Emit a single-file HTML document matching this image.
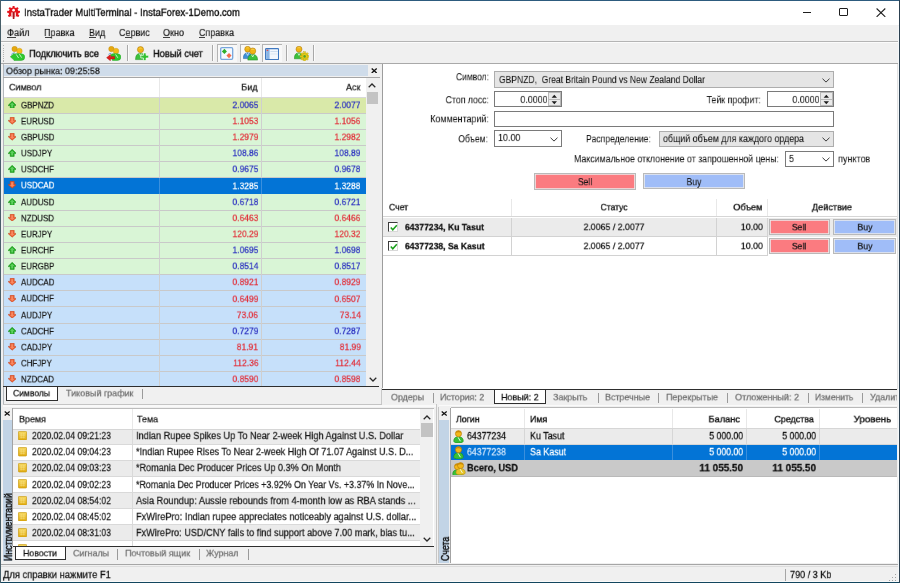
<!DOCTYPE html>
<html><head><meta charset="utf-8"><title>InstaTrader MultiTerminal</title><style>
html,body{margin:0;padding:0;width:900px;height:583px;overflow:hidden;background:#f0f0f0}
body{position:relative;font-family:"Liberation Sans", sans-serif}
.b{position:absolute}
.t{position:absolute;white-space:nowrap;line-height:1;font-family:"Liberation Sans", sans-serif;will-change:transform}
</style></head><body>
<div class="b" style="left:0.00px;top:0.00px;width:900.00px;height:583.00px;background:#f0f0f0"></div>
<div class="b" style="left:1.00px;top:1.00px;width:898.00px;height:24.00px;background:#fff"></div>
<div class="b" style="left:0.00px;top:0.00px;width:900.00px;height:1.00px;background:#2d5b7e"></div>
<div class="b" style="left:0.00px;top:582.00px;width:900.00px;height:1.00px;background:#2d5b7e"></div>
<div class="b" style="left:0.00px;top:0.00px;width:1.00px;height:583.00px;background:#35596f"></div>
<div class="b" style="left:899.00px;top:0.00px;width:1.00px;height:583.00px;background:#2d5b7e"></div>
<svg class="b" style="left:7px;top:5.6px" width="13.2" height="13.4" viewBox="0 0 13 13.2">
<g fill="#e4141c">
<circle cx="6.5" cy="6.4" r="4.9"/>
<g id="tt"><rect x="5.5" y="0" width="2" height="2.4" rx="0.4"/></g>
<use href="#tt" transform="rotate(42 6.5 6.4)"/><use href="#tt" transform="rotate(84 6.5 6.4)"/><use href="#tt" transform="rotate(126 6.5 6.4)"/>
<use href="#tt" transform="rotate(-42 6.5 6.4)"/><use href="#tt" transform="rotate(-84 6.5 6.4)"/><use href="#tt" transform="rotate(-126 6.5 6.4)"/>
</g>
<g fill="#fff"><circle cx="6.5" cy="4.1" r="1.3"/><rect x="4.3" y="6.3" width="1.3" height="7"/><rect x="7.4" y="6.3" width="1.3" height="7"/><rect x="5.5" y="11.6" width="2" height="1.6"/></g>
<rect x="5.7" y="6" width="1.6" height="7" fill="#a8141c"/>
</svg>
<div class="t" style="left:24.00px;top:7px;font-size:13.46px;color:#151515;transform:scale(0.711,0.81);transform-origin:0 0;-webkit-text-stroke-width:0.45px;">InstaTrader MultiTerminal - InstaForex-1Demo.com</div>
<div class="b" style="left:802.80px;top:11.80px;width:8.40px;height:1.00px;background:#1e1e1e"></div>
<div class="b" style="left:839.00px;top:8.10px;width:8.80px;height:7.80px;border:1.1px solid #1e1e1e;box-sizing:border-box;border-radius:1px"></div>
<svg class="b" style="left:875.5px;top:7.6px" width="10" height="9.4" viewBox="0 0 10 9.4"><path d="M0.6 0.5 L9.3 8.9 M9.3 0.5 L0.6 8.9" stroke="#1e1e1e" stroke-width="1.05"/></svg>
<div class="b" style="left:1.00px;top:25.00px;width:898.00px;height:16.00px;background:#f0f0f0"></div>
<div class="b" style="left:1.00px;top:41.00px;width:898.00px;height:1.00px;background:#b4b4b4"></div>
<div class="t" style="left:6.70px;top:28px;font-size:12.10px;color:#151515;transform:scale(0.7595,0.81);transform-origin:0 0;-webkit-text-stroke-width:0.2px;">Файл</div>
<div class="b" style="left:6.50px;top:36.9px;width:9px;height:0.9px;background:#404040"></div>
<div class="t" style="left:44.00px;top:28px;font-size:12.10px;color:#151515;transform:scale(0.7438,0.81);transform-origin:0 0;-webkit-text-stroke-width:0.2px;">Правка</div>
<div class="b" style="left:44.50px;top:36.9px;width:7px;height:0.9px;background:#404040"></div>
<div class="t" style="left:89.30px;top:28px;font-size:12.10px;color:#151515;transform:scale(0.7438,0.81);transform-origin:0 0;-webkit-text-stroke-width:0.2px;">Вид</div>
<div class="b" style="left:89.40px;top:36.9px;width:6.2px;height:0.9px;background:#404040"></div>
<div class="t" style="left:119.20px;top:28px;font-size:12.10px;color:#151515;transform:scale(0.7438,0.81);transform-origin:0 0;-webkit-text-stroke-width:0.2px;">Сервис</div>
<div class="b" style="left:125.00px;top:36.9px;width:5.6px;height:0.9px;background:#404040"></div>
<div class="t" style="left:163.20px;top:28px;font-size:12.10px;color:#151515;transform:scale(0.7438,0.81);transform-origin:0 0;-webkit-text-stroke-width:0.2px;">Окно</div>
<div class="b" style="left:163.40px;top:36.9px;width:7px;height:0.9px;background:#404040"></div>
<div class="t" style="left:198.70px;top:28px;font-size:12.10px;color:#151515;transform:scale(0.7372,0.81);transform-origin:0 0;-webkit-text-stroke-width:0.2px;">Справка</div>
<div class="b" style="left:198.80px;top:36.9px;width:6.2px;height:0.9px;background:#404040"></div>
<div class="b" style="left:1.00px;top:42.00px;width:898.00px;height:21.00px;background:#f0f0f0"></div>
<div class="b" style="left:1.00px;top:42.00px;width:898.00px;height:1.00px;background:#fbfbfb"></div>
<div class="b" style="left:1.00px;top:63.00px;width:898.00px;height:1.00px;background:#a9a9a9"></div>
<div class="b" style="left:2.50px;top:45.40px;width:1.60px;height:1.10px;background:#b2b2b2"></div>
<div class="b" style="left:2.50px;top:47.55px;width:1.60px;height:1.10px;background:#b2b2b2"></div>
<div class="b" style="left:2.50px;top:49.70px;width:1.60px;height:1.10px;background:#b2b2b2"></div>
<div class="b" style="left:2.50px;top:51.85px;width:1.60px;height:1.10px;background:#b2b2b2"></div>
<div class="b" style="left:2.50px;top:54.00px;width:1.60px;height:1.10px;background:#b2b2b2"></div>
<div class="b" style="left:2.50px;top:56.15px;width:1.60px;height:1.10px;background:#b2b2b2"></div>
<div class="b" style="left:2.50px;top:58.30px;width:1.60px;height:1.10px;background:#b2b2b2"></div>
<div class="b" style="left:2.50px;top:60.45px;width:1.60px;height:1.10px;background:#b2b2b2"></div>
<div class="b" style="left:126.90px;top:45.00px;width:1.10px;height:16.00px;background:#a8a8a8"></div>
<div class="b" style="left:128.00px;top:45.00px;width:0.90px;height:16.00px;background:#fbfbfb"></div>
<div class="b" style="left:212.10px;top:45.00px;width:1.10px;height:16.00px;background:#a8a8a8"></div>
<div class="b" style="left:213.20px;top:45.00px;width:0.90px;height:16.00px;background:#fbfbfb"></div>
<div class="b" style="left:286.10px;top:45.00px;width:1.10px;height:16.00px;background:#a8a8a8"></div>
<div class="b" style="left:287.20px;top:45.00px;width:0.90px;height:16.00px;background:#fbfbfb"></div>
<div class="b" style="left:313.00px;top:45.00px;width:1.10px;height:16.00px;background:#a8a8a8"></div>
<div class="b" style="left:314.10px;top:45.00px;width:0.90px;height:16.00px;background:#fbfbfb"></div>
<div class="t" style="left:28.60px;top:49px;font-size:12.59px;color:#151515;transform:scale(0.7403,0.81);transform-origin:0 0;-webkit-text-stroke-width:0.5px;">Подключить все</div>
<div class="t" style="left:153.30px;top:49px;font-size:12.59px;color:#151515;transform:scale(0.7403,0.81);transform-origin:0 0;-webkit-text-stroke-width:0.5px;">Новый счет</div>
<div class="b" style="left:217.10px;top:44.10px;width:19.90px;height:17.50px;background:#f8f8f8;border-top:1.2px solid #b4b4b4;border-left:1.2px solid #b4b4b4;box-sizing:border-box"></div>
<div class="b" style="left:239.70px;top:44.10px;width:20.30px;height:17.50px;background:#f8f8f8;border-top:1.2px solid #b4b4b4;border-left:1.2px solid #b4b4b4;box-sizing:border-box"></div>
<div class="b" style="left:261.80px;top:44.10px;width:20.50px;height:17.50px;background:#f8f8f8;border-top:1.2px solid #b4b4b4;border-left:1.2px solid #b4b4b4;box-sizing:border-box"></div>
<svg class="b" style="left:9.8px;top:46.2px" width="15.5" height="15" viewBox="0 0 15.5 15">
<path d="M1.2 8.6 Q2.6 6.6 5 6.8" stroke="#6aa8d8" stroke-width="0.9" fill="none"/>
<circle cx="4.6" cy="3" r="2.7" fill="#e6a810" stroke="#c08808" stroke-width="0.4"/><circle cx="9.4" cy="5" r="2.8" fill="#f2bc18" stroke="#c89010" stroke-width="0.4"/>
<path d="M0.3 10.8 L4 7.4 L4 8.2 Q6.2 7.3 9.2 7.7 L11.6 7.7 Q14.8 8.3 14.8 11 Q14.8 14.5 11 14.5 L4 14.5 L4 14.1 Z" fill="#2ec82e" stroke="#16a016" stroke-width="0.4"/>
<path d="M6.2 8.4 L8.6 12 M9.4 8.2 L11.6 11.6" stroke="#e8fbe8" stroke-width="0.8"/>
</svg>
<svg class="b" style="left:105.6px;top:46.2px" width="15.5" height="15" viewBox="0 0 15.5 15">
<circle cx="5.4" cy="3" r="2.7" fill="#e6a810" stroke="#c08808" stroke-width="0.4"/><circle cx="10" cy="5" r="2.8" fill="#f2bc18" stroke="#c89010" stroke-width="0.4"/>
<path d="M4.6 9 Q6.6 7.3 9.6 7.7 L11.8 7.7 Q14.9 8.3 14.9 11 Q14.9 14.5 11.2 14.5 L6.5 14.5 Z" fill="#2ec82e" stroke="#16a016" stroke-width="0.4"/>
<path d="M9.6 8.4 L11.8 11.8" stroke="#e8fbe8" stroke-width="0.8"/>
<path d="M2.4 8.4 Q3.6 7.2 5.4 7.4" stroke="#5aa0d8" stroke-width="0.9" fill="none"/>
<path d="M0.6 11.7 L4.4 8.6 L4.4 10.4 L8.6 10.4 L8.6 13 L4.4 13 L4.4 14.8 Z" fill="#e01c1c" stroke="#a00c0c" stroke-width="0.4"/>
</svg>
<svg class="b" style="left:134.6px;top:46.2px" width="14.5" height="15" viewBox="0 0 14.5 15">
<path d="M0.5 13.6 Q0.5 7.2 5.5 7.2 Q10.5 7.2 10.5 13.6 Z" fill="#3cc03c" stroke="#1a8a1a" stroke-width="0.5"/><path d="M4.3 7.5 L5.5 9.8 L6.7 7.5" stroke="#f0fff0" stroke-width="0.7" fill="none"/><circle cx="5.5" cy="3.6" r="3.1" fill="#f0b414" stroke="#a87406" stroke-width="0.5"/><path d="M3.33 2.67 Q5.5 0.1899999999999995 7.67 2.67" fill="#f8d860" opacity="0.6"/>
<path d="M8.4 6.9 H11.1 V9.3 H13.7 V12 H11.1 V14.6 H8.4 V12 H5.8 V9.3 H8.4 Z" fill="#30c030" stroke="#fff" stroke-width="0.7"/></svg>
<svg class="b" style="left:220.3px;top:47px" width="13.4" height="13" viewBox="0 0 13.4 13">
<rect x="0.7" y="0.7" width="12" height="11.6" rx="1.2" fill="#f4f9ff" stroke="#78a6dc" stroke-width="1.3"/>
<rect x="2.6" y="2.6" width="3.6" height="3.6" fill="#2cae2c" transform="rotate(45 4.4 4.4)"/>
<rect x="7.2" y="6.8" width="3.6" height="3.6" fill="#f4684a" transform="rotate(45 9 8.6)"/></svg>
<svg class="b" style="left:242.7px;top:46.4px" width="15" height="14.2" viewBox="0 0 15 14.2">
<path d="M0.3 12.6 Q0.3 6.8 4.6000000000000005 6.8 Q8.9 6.8 8.9 12.6 Z" fill="#3f90d8" stroke="#2060a0" stroke-width="0.5"/><path d="M3.4000000000000004 7.1 L4.6000000000000005 9.4 L5.800000000000001 7.1" stroke="#f0fff0" stroke-width="0.7" fill="none"/><circle cx="4.6" cy="3.2" r="2.9" fill="#f0b414" stroke="#a87406" stroke-width="0.5"/><path d="M2.57 2.33 Q4.6 0.010000000000000231 6.629999999999999 2.33" fill="#f8d860" opacity="0.6"/>
<path d="M4.8 14.1 Q4.8 8.4 9.7 8.4 Q14.6 8.4 14.6 14.1 Z" fill="#3cc03c" stroke="#1a8a1a" stroke-width="0.5"/><path d="M8.5 8.700000000000001 L9.7 11.0 L10.899999999999999 8.700000000000001" stroke="#f0fff0" stroke-width="0.7" fill="none"/><circle cx="9.7" cy="5" r="3.1" fill="#f0b414" stroke="#a87406" stroke-width="0.5"/><path d="M7.529999999999999 4.07 Q9.7 1.5899999999999994 11.87 4.07" fill="#f8d860" opacity="0.6"/></svg>
<svg class="b" style="left:265px;top:47.5px" width="14.2" height="12.2" viewBox="0 0 14.2 12.2">
<rect x="0.6" y="0.6" width="13" height="11" rx="0.8" fill="#f2f7fd" stroke="#3f78c0" stroke-width="1.2"/>
<rect x="1.2" y="1.2" width="3.4" height="9.8" fill="#8ab4e4"/><rect x="1.6" y="1.6" width="1.6" height="1.4" fill="#e05050"/>
<rect x="5.4" y="3.2" width="7.4" height="0.8" fill="#c4d6ea"/><rect x="5.4" y="5.6" width="7.4" height="0.8" fill="#d6e2ee"/></svg>
<svg class="b" style="left:293.8px;top:45.6px" width="15.4" height="15.2" viewBox="0 0 15.4 15.2">
<path d="M0.3 12.8 Q0.3 6.8 5.0 6.8 Q9.7 6.8 9.7 12.8 Z" fill="#3cc03c" stroke="#1a8a1a" stroke-width="0.5"/><path d="M3.8 7.1 L5.0 9.4 L6.2 7.1" stroke="#f0fff0" stroke-width="0.7" fill="none"/><circle cx="5" cy="3.2" r="3" fill="#f0b414" stroke="#a87406" stroke-width="0.5"/><path d="M2.9000000000000004 2.3000000000000003 Q5 -0.10000000000000009 7.1 2.3000000000000003" fill="#f8d860" opacity="0.6"/>
<g transform="translate(10.6 10.4)"><g fill="#e8d018" stroke="#b8a010" stroke-width="0.4">
<circle r="3.3"/><rect x="-0.9" y="-4.6" width="1.8" height="2" transform="rotate(0)"/><rect x="-0.9" y="-4.6" width="1.8" height="2" transform="rotate(45)"/><rect x="-0.9" y="-4.6" width="1.8" height="2" transform="rotate(90)"/><rect x="-0.9" y="-4.6" width="1.8" height="2" transform="rotate(135)"/><rect x="-0.9" y="-4.6" width="1.8" height="2" transform="rotate(180)"/><rect x="-0.9" y="-4.6" width="1.8" height="2" transform="rotate(225)"/><rect x="-0.9" y="-4.6" width="1.8" height="2" transform="rotate(270)"/><rect x="-0.9" y="-4.6" width="1.8" height="2" transform="rotate(315)"/></g>
<circle r="1.3" fill="#58a028"/></g></svg>
<div class="b" style="left:3.00px;top:64.00px;width:1.00px;height:340.00px;background:#b4b8bc"></div>
<div class="b" style="left:4.00px;top:65.00px;width:364.00px;height:11.00px;background:#cfdcea"></div>
<div class="t" style="left:5.50px;top:66px;font-size:11.60px;color:#1a1a1a;transform:scale(0.775,0.81);transform-origin:0 0;-webkit-text-stroke-width:0.3px;">Обзор рынка: 09:25:58</div>
<svg class="b" style="left:371.4px;top:67.8px" width="6.4" height="5.6" viewBox="0 0 6.4 5.6"><path d="M0.7 0.6 L5.7 5 M5.7 0.6 L0.7 5" stroke="#111" stroke-width="1.35"/></svg>
<div class="b" style="left:3.00px;top:76.80px;width:377.00px;height:1.00px;background:#a6a6a6"></div>
<div class="b" style="left:4.00px;top:77.80px;width:362.00px;height:308.50px;background:#fff"></div>
<div class="b" style="left:159.20px;top:78.00px;width:1.00px;height:19.00px;background:#e8e8e8"></div>
<div class="b" style="left:261.20px;top:78.00px;width:1.00px;height:19.00px;background:#e8e8e8"></div>
<div class="b" style="left:4.00px;top:96.60px;width:362.00px;height:1.00px;background:#d8d8d8"></div>
<div class="t" style="left:9.40px;top:83px;font-size:10.86px;color:#1a1a1a;transform:scale(0.8297,0.81);transform-origin:0 0;-webkit-text-stroke-width:0.3px;">Символ</div>
<div class="t" style="right:642.40px;top:83px;font-size:10.86px;color:#1a1a1a;transform:scale(0.8287,0.81);transform-origin:100% 0;-webkit-text-stroke-width:0.3px;">Бид</div>
<div class="t" style="right:539.80px;top:83px;font-size:10.86px;color:#1a1a1a;transform:scale(0.8287,0.81);transform-origin:100% 0;-webkit-text-stroke-width:0.3px;">Аск</div>
<div class="b" style="left:4px;top:97px;width:362px;height:289.3px;overflow:hidden">
<div class="b" style="left:0.00px;top:0.50px;width:362.00px;height:16.15px;background:#d9e9a9"></div>
<div class="b" style="left:0.00px;top:15.65px;width:362.00px;height:1.00px;background:#c9c9c9"></div>
<div class="b" style="left:155.20px;top:0.50px;width:1.00px;height:16.15px;background:#cfcfcf"></div>
<div class="b" style="left:257.20px;top:0.50px;width:1.00px;height:16.15px;background:#cfcfcf"></div>
<svg class="b" style="left:3.8px;top:3.70px" width="8.6" height="7.7" viewBox="0 0 8.6 7.7"><path d="M4.2 0.3 L8.2 4.2 Q8.5 4.6 8 4.6 L6.2 4.6 L6.2 7.4 L2.2 7.4 L2.2 4.6 L0.4 4.6 Q-0.1 4.6 0.2 4.2 Z" fill="#1eaa1e" stroke="#118a11" stroke-width="0.5" stroke-linejoin="round"/><path d="M4.2 1.6 L6.4 3.9 L5.2 3.9 L5.2 6.4 L3.2 6.4 L3.2 3.9 L2 3.9 Z" fill="#8ae88a" opacity="0.6"/></svg>
<div class="t" style="left:16.60px;top:4px;font-size:10.99px;color:#1c1c1c;transform:scale(0.7207,0.81);transform-origin:0 0;-webkit-text-stroke-width:0.3px;">GBPNZD</div>
<div class="t" style="right:107.70px;top:3px;font-size:11.60px;color:#2b30c0;transform:scale(0.7328,0.81);transform-origin:100% 0;-webkit-text-stroke-width:0.3px;">2.0065</div>
<div class="t" style="right:5.20px;top:3px;font-size:11.60px;color:#2b30c0;transform:scale(0.7328,0.81);transform-origin:100% 0;-webkit-text-stroke-width:0.3px;">2.0077</div>
<div class="b" style="left:0.00px;top:16.65px;width:362.00px;height:16.15px;background:#d9f5d6"></div>
<div class="b" style="left:0.00px;top:31.80px;width:362.00px;height:1.00px;background:#c9c9c9"></div>
<div class="b" style="left:155.20px;top:16.65px;width:1.00px;height:16.15px;background:#cfcfcf"></div>
<div class="b" style="left:257.20px;top:16.65px;width:1.00px;height:16.15px;background:#cfcfcf"></div>
<svg class="b" style="left:3.8px;top:19.85px" width="8.6" height="7.7" viewBox="0 0 8.6 7.7"><path d="M2.2 0.3 L6.2 0.3 L6.2 3.4 L8 3.4 Q8.5 3.4 8.2 3.8 L4.2 7.2 L0.2 3.8 Q-0.1 3.4 0.4 3.4 L2.2 3.4 Z" fill="#ee5a2c" stroke="#c0401a" stroke-width="0.5" stroke-linejoin="round"/><path d="M3.2 1.2 L5.2 1.2 L5.2 3.9 L6.4 3.9 L4.2 5.9 L2 3.9 L3.2 3.9 Z" fill="#ffb090" opacity="0.55"/></svg>
<div class="t" style="left:16.60px;top:20px;font-size:10.99px;color:#1c1c1c;transform:scale(0.7207,0.81);transform-origin:0 0;-webkit-text-stroke-width:0.3px;">EURUSD</div>
<div class="t" style="right:107.70px;top:19px;font-size:11.60px;color:#e2303a;transform:scale(0.7328,0.81);transform-origin:100% 0;-webkit-text-stroke-width:0.3px;">1.1053</div>
<div class="t" style="right:5.20px;top:19px;font-size:11.60px;color:#e2303a;transform:scale(0.7328,0.81);transform-origin:100% 0;-webkit-text-stroke-width:0.3px;">1.1056</div>
<div class="b" style="left:0.00px;top:32.80px;width:362.00px;height:16.15px;background:#d9f5d6"></div>
<div class="b" style="left:0.00px;top:47.95px;width:362.00px;height:1.00px;background:#c9c9c9"></div>
<div class="b" style="left:155.20px;top:32.80px;width:1.00px;height:16.15px;background:#cfcfcf"></div>
<div class="b" style="left:257.20px;top:32.80px;width:1.00px;height:16.15px;background:#cfcfcf"></div>
<svg class="b" style="left:3.8px;top:36.00px" width="8.6" height="7.7" viewBox="0 0 8.6 7.7"><path d="M2.2 0.3 L6.2 0.3 L6.2 3.4 L8 3.4 Q8.5 3.4 8.2 3.8 L4.2 7.2 L0.2 3.8 Q-0.1 3.4 0.4 3.4 L2.2 3.4 Z" fill="#ee5a2c" stroke="#c0401a" stroke-width="0.5" stroke-linejoin="round"/><path d="M3.2 1.2 L5.2 1.2 L5.2 3.9 L6.4 3.9 L4.2 5.9 L2 3.9 L3.2 3.9 Z" fill="#ffb090" opacity="0.55"/></svg>
<div class="t" style="left:16.60px;top:36px;font-size:10.99px;color:#1c1c1c;transform:scale(0.7207,0.81);transform-origin:0 0;-webkit-text-stroke-width:0.3px;">GBPUSD</div>
<div class="t" style="right:107.70px;top:35px;font-size:11.60px;color:#e2303a;transform:scale(0.7328,0.81);transform-origin:100% 0;-webkit-text-stroke-width:0.3px;">1.2979</div>
<div class="t" style="right:5.20px;top:35px;font-size:11.60px;color:#e2303a;transform:scale(0.7328,0.81);transform-origin:100% 0;-webkit-text-stroke-width:0.3px;">1.2982</div>
<div class="b" style="left:0.00px;top:48.95px;width:362.00px;height:16.15px;background:#d9f5d6"></div>
<div class="b" style="left:0.00px;top:64.10px;width:362.00px;height:1.00px;background:#c9c9c9"></div>
<div class="b" style="left:155.20px;top:48.95px;width:1.00px;height:16.15px;background:#cfcfcf"></div>
<div class="b" style="left:257.20px;top:48.95px;width:1.00px;height:16.15px;background:#cfcfcf"></div>
<svg class="b" style="left:3.8px;top:52.15px" width="8.6" height="7.7" viewBox="0 0 8.6 7.7"><path d="M4.2 0.3 L8.2 4.2 Q8.5 4.6 8 4.6 L6.2 4.6 L6.2 7.4 L2.2 7.4 L2.2 4.6 L0.4 4.6 Q-0.1 4.6 0.2 4.2 Z" fill="#1eaa1e" stroke="#118a11" stroke-width="0.5" stroke-linejoin="round"/><path d="M4.2 1.6 L6.4 3.9 L5.2 3.9 L5.2 6.4 L3.2 6.4 L3.2 3.9 L2 3.9 Z" fill="#8ae88a" opacity="0.6"/></svg>
<div class="t" style="left:16.60px;top:52px;font-size:10.99px;color:#1c1c1c;transform:scale(0.7207,0.81);transform-origin:0 0;-webkit-text-stroke-width:0.3px;">USDJPY</div>
<div class="t" style="right:107.70px;top:51px;font-size:11.60px;color:#2b30c0;transform:scale(0.7328,0.81);transform-origin:100% 0;-webkit-text-stroke-width:0.3px;">108.86</div>
<div class="t" style="right:5.20px;top:51px;font-size:11.60px;color:#2b30c0;transform:scale(0.7328,0.81);transform-origin:100% 0;-webkit-text-stroke-width:0.3px;">108.89</div>
<div class="b" style="left:0.00px;top:65.10px;width:362.00px;height:16.15px;background:#d9f5d6"></div>
<div class="b" style="left:0.00px;top:80.25px;width:362.00px;height:1.00px;background:#c9c9c9"></div>
<div class="b" style="left:155.20px;top:65.10px;width:1.00px;height:16.15px;background:#cfcfcf"></div>
<div class="b" style="left:257.20px;top:65.10px;width:1.00px;height:16.15px;background:#cfcfcf"></div>
<svg class="b" style="left:3.8px;top:68.30px" width="8.6" height="7.7" viewBox="0 0 8.6 7.7"><path d="M4.2 0.3 L8.2 4.2 Q8.5 4.6 8 4.6 L6.2 4.6 L6.2 7.4 L2.2 7.4 L2.2 4.6 L0.4 4.6 Q-0.1 4.6 0.2 4.2 Z" fill="#1eaa1e" stroke="#118a11" stroke-width="0.5" stroke-linejoin="round"/><path d="M4.2 1.6 L6.4 3.9 L5.2 3.9 L5.2 6.4 L3.2 6.4 L3.2 3.9 L2 3.9 Z" fill="#8ae88a" opacity="0.6"/></svg>
<div class="t" style="left:16.60px;top:68px;font-size:10.99px;color:#1c1c1c;transform:scale(0.7207,0.81);transform-origin:0 0;-webkit-text-stroke-width:0.3px;">USDCHF</div>
<div class="t" style="right:107.70px;top:67px;font-size:11.60px;color:#2b30c0;transform:scale(0.7328,0.81);transform-origin:100% 0;-webkit-text-stroke-width:0.3px;">0.9675</div>
<div class="t" style="right:5.20px;top:67px;font-size:11.60px;color:#2b30c0;transform:scale(0.7328,0.81);transform-origin:100% 0;-webkit-text-stroke-width:0.3px;">0.9678</div>
<div class="b" style="left:0.00px;top:81.25px;width:362.00px;height:16.15px;background:#0374d6"></div>
<div class="b" style="left:257.20px;top:81.25px;width:1.00px;height:16.15px;background:#3a90de"></div>
<div class="b" style="left:155.20px;top:81.25px;width:1.00px;height:16.15px;background:#3a90de"></div>
<svg class="b" style="left:3.8px;top:84.45px" width="8.6" height="7.7" viewBox="0 0 8.6 7.7"><path d="M2.2 0.3 L6.2 0.3 L6.2 3.4 L8 3.4 Q8.5 3.4 8.2 3.8 L4.2 7.2 L0.2 3.8 Q-0.1 3.4 0.4 3.4 L2.2 3.4 Z" fill="#ee5a2c" stroke="#c0401a" stroke-width="0.5" stroke-linejoin="round"/><path d="M3.2 1.2 L5.2 1.2 L5.2 3.9 L6.4 3.9 L4.2 5.9 L2 3.9 L3.2 3.9 Z" fill="#ffb090" opacity="0.55"/></svg>
<div class="t" style="left:16.60px;top:84px;font-size:10.99px;color:#fff;transform:scale(0.7207,0.81);transform-origin:0 0;-webkit-text-stroke-width:0.3px;">USDCAD</div>
<div class="t" style="right:107.70px;top:84px;font-size:11.60px;color:#fff;transform:scale(0.7328,0.81);transform-origin:100% 0;-webkit-text-stroke-width:0.3px;">1.3285</div>
<div class="t" style="right:5.20px;top:84px;font-size:11.60px;color:#fff;transform:scale(0.7328,0.81);transform-origin:100% 0;-webkit-text-stroke-width:0.3px;">1.3288</div>
<div class="b" style="left:0.00px;top:97.40px;width:362.00px;height:16.15px;background:#d9f5d6"></div>
<div class="b" style="left:0.00px;top:112.55px;width:362.00px;height:1.00px;background:#c9c9c9"></div>
<div class="b" style="left:155.20px;top:97.40px;width:1.00px;height:16.15px;background:#cfcfcf"></div>
<div class="b" style="left:257.20px;top:97.40px;width:1.00px;height:16.15px;background:#cfcfcf"></div>
<svg class="b" style="left:3.8px;top:100.60px" width="8.6" height="7.7" viewBox="0 0 8.6 7.7"><path d="M4.2 0.3 L8.2 4.2 Q8.5 4.6 8 4.6 L6.2 4.6 L6.2 7.4 L2.2 7.4 L2.2 4.6 L0.4 4.6 Q-0.1 4.6 0.2 4.2 Z" fill="#1eaa1e" stroke="#118a11" stroke-width="0.5" stroke-linejoin="round"/><path d="M4.2 1.6 L6.4 3.9 L5.2 3.9 L5.2 6.4 L3.2 6.4 L3.2 3.9 L2 3.9 Z" fill="#8ae88a" opacity="0.6"/></svg>
<div class="t" style="left:16.60px;top:101px;font-size:10.99px;color:#1c1c1c;transform:scale(0.7207,0.81);transform-origin:0 0;-webkit-text-stroke-width:0.3px;">AUDUSD</div>
<div class="t" style="right:107.70px;top:100px;font-size:11.60px;color:#2b30c0;transform:scale(0.7328,0.81);transform-origin:100% 0;-webkit-text-stroke-width:0.3px;">0.6718</div>
<div class="t" style="right:5.20px;top:100px;font-size:11.60px;color:#2b30c0;transform:scale(0.7328,0.81);transform-origin:100% 0;-webkit-text-stroke-width:0.3px;">0.6721</div>
<div class="b" style="left:0.00px;top:113.55px;width:362.00px;height:16.15px;background:#d9f5d6"></div>
<div class="b" style="left:0.00px;top:128.70px;width:362.00px;height:1.00px;background:#c9c9c9"></div>
<div class="b" style="left:155.20px;top:113.55px;width:1.00px;height:16.15px;background:#cfcfcf"></div>
<div class="b" style="left:257.20px;top:113.55px;width:1.00px;height:16.15px;background:#cfcfcf"></div>
<svg class="b" style="left:3.8px;top:116.75px" width="8.6" height="7.7" viewBox="0 0 8.6 7.7"><path d="M2.2 0.3 L6.2 0.3 L6.2 3.4 L8 3.4 Q8.5 3.4 8.2 3.8 L4.2 7.2 L0.2 3.8 Q-0.1 3.4 0.4 3.4 L2.2 3.4 Z" fill="#ee5a2c" stroke="#c0401a" stroke-width="0.5" stroke-linejoin="round"/><path d="M3.2 1.2 L5.2 1.2 L5.2 3.9 L6.4 3.9 L4.2 5.9 L2 3.9 L3.2 3.9 Z" fill="#ffb090" opacity="0.55"/></svg>
<div class="t" style="left:16.60px;top:117px;font-size:10.99px;color:#1c1c1c;transform:scale(0.7207,0.81);transform-origin:0 0;-webkit-text-stroke-width:0.3px;">NZDUSD</div>
<div class="t" style="right:107.70px;top:116px;font-size:11.60px;color:#e2303a;transform:scale(0.7328,0.81);transform-origin:100% 0;-webkit-text-stroke-width:0.3px;">0.6463</div>
<div class="t" style="right:5.20px;top:116px;font-size:11.60px;color:#e2303a;transform:scale(0.7328,0.81);transform-origin:100% 0;-webkit-text-stroke-width:0.3px;">0.6466</div>
<div class="b" style="left:0.00px;top:129.70px;width:362.00px;height:16.15px;background:#d9f5d6"></div>
<div class="b" style="left:0.00px;top:144.85px;width:362.00px;height:1.00px;background:#c9c9c9"></div>
<div class="b" style="left:155.20px;top:129.70px;width:1.00px;height:16.15px;background:#cfcfcf"></div>
<div class="b" style="left:257.20px;top:129.70px;width:1.00px;height:16.15px;background:#cfcfcf"></div>
<svg class="b" style="left:3.8px;top:132.90px" width="8.6" height="7.7" viewBox="0 0 8.6 7.7"><path d="M2.2 0.3 L6.2 0.3 L6.2 3.4 L8 3.4 Q8.5 3.4 8.2 3.8 L4.2 7.2 L0.2 3.8 Q-0.1 3.4 0.4 3.4 L2.2 3.4 Z" fill="#ee5a2c" stroke="#c0401a" stroke-width="0.5" stroke-linejoin="round"/><path d="M3.2 1.2 L5.2 1.2 L5.2 3.9 L6.4 3.9 L4.2 5.9 L2 3.9 L3.2 3.9 Z" fill="#ffb090" opacity="0.55"/></svg>
<div class="t" style="left:16.60px;top:133px;font-size:10.99px;color:#1c1c1c;transform:scale(0.7207,0.81);transform-origin:0 0;-webkit-text-stroke-width:0.3px;">EURJPY</div>
<div class="t" style="right:107.70px;top:132px;font-size:11.60px;color:#e2303a;transform:scale(0.7328,0.81);transform-origin:100% 0;-webkit-text-stroke-width:0.3px;">120.29</div>
<div class="t" style="right:5.20px;top:132px;font-size:11.60px;color:#e2303a;transform:scale(0.7328,0.81);transform-origin:100% 0;-webkit-text-stroke-width:0.3px;">120.32</div>
<div class="b" style="left:0.00px;top:145.85px;width:362.00px;height:16.15px;background:#d9f5d6"></div>
<div class="b" style="left:0.00px;top:161.00px;width:362.00px;height:1.00px;background:#c9c9c9"></div>
<div class="b" style="left:155.20px;top:145.85px;width:1.00px;height:16.15px;background:#cfcfcf"></div>
<div class="b" style="left:257.20px;top:145.85px;width:1.00px;height:16.15px;background:#cfcfcf"></div>
<svg class="b" style="left:3.8px;top:149.05px" width="8.6" height="7.7" viewBox="0 0 8.6 7.7"><path d="M4.2 0.3 L8.2 4.2 Q8.5 4.6 8 4.6 L6.2 4.6 L6.2 7.4 L2.2 7.4 L2.2 4.6 L0.4 4.6 Q-0.1 4.6 0.2 4.2 Z" fill="#1eaa1e" stroke="#118a11" stroke-width="0.5" stroke-linejoin="round"/><path d="M4.2 1.6 L6.4 3.9 L5.2 3.9 L5.2 6.4 L3.2 6.4 L3.2 3.9 L2 3.9 Z" fill="#8ae88a" opacity="0.6"/></svg>
<div class="t" style="left:16.60px;top:149px;font-size:10.99px;color:#1c1c1c;transform:scale(0.7207,0.81);transform-origin:0 0;-webkit-text-stroke-width:0.3px;">EURCHF</div>
<div class="t" style="right:107.70px;top:148px;font-size:11.60px;color:#2b30c0;transform:scale(0.7328,0.81);transform-origin:100% 0;-webkit-text-stroke-width:0.3px;">1.0695</div>
<div class="t" style="right:5.20px;top:148px;font-size:11.60px;color:#2b30c0;transform:scale(0.7328,0.81);transform-origin:100% 0;-webkit-text-stroke-width:0.3px;">1.0698</div>
<div class="b" style="left:0.00px;top:162.00px;width:362.00px;height:16.15px;background:#d9f5d6"></div>
<div class="b" style="left:0.00px;top:177.15px;width:362.00px;height:1.00px;background:#c9c9c9"></div>
<div class="b" style="left:155.20px;top:162.00px;width:1.00px;height:16.15px;background:#cfcfcf"></div>
<div class="b" style="left:257.20px;top:162.00px;width:1.00px;height:16.15px;background:#cfcfcf"></div>
<svg class="b" style="left:3.8px;top:165.20px" width="8.6" height="7.7" viewBox="0 0 8.6 7.7"><path d="M4.2 0.3 L8.2 4.2 Q8.5 4.6 8 4.6 L6.2 4.6 L6.2 7.4 L2.2 7.4 L2.2 4.6 L0.4 4.6 Q-0.1 4.6 0.2 4.2 Z" fill="#1eaa1e" stroke="#118a11" stroke-width="0.5" stroke-linejoin="round"/><path d="M4.2 1.6 L6.4 3.9 L5.2 3.9 L5.2 6.4 L3.2 6.4 L3.2 3.9 L2 3.9 Z" fill="#8ae88a" opacity="0.6"/></svg>
<div class="t" style="left:16.60px;top:165px;font-size:10.99px;color:#1c1c1c;transform:scale(0.7207,0.81);transform-origin:0 0;-webkit-text-stroke-width:0.3px;">EURGBP</div>
<div class="t" style="right:107.70px;top:164px;font-size:11.60px;color:#2b30c0;transform:scale(0.7328,0.81);transform-origin:100% 0;-webkit-text-stroke-width:0.3px;">0.8514</div>
<div class="t" style="right:5.20px;top:164px;font-size:11.60px;color:#2b30c0;transform:scale(0.7328,0.81);transform-origin:100% 0;-webkit-text-stroke-width:0.3px;">0.8517</div>
<div class="b" style="left:0.00px;top:178.15px;width:362.00px;height:16.15px;background:#c6e0fa"></div>
<div class="b" style="left:0.00px;top:193.30px;width:362.00px;height:1.00px;background:#c9c9c9"></div>
<div class="b" style="left:155.20px;top:178.15px;width:1.00px;height:16.15px;background:#cfcfcf"></div>
<div class="b" style="left:257.20px;top:178.15px;width:1.00px;height:16.15px;background:#cfcfcf"></div>
<svg class="b" style="left:3.8px;top:181.35px" width="8.6" height="7.7" viewBox="0 0 8.6 7.7"><path d="M2.2 0.3 L6.2 0.3 L6.2 3.4 L8 3.4 Q8.5 3.4 8.2 3.8 L4.2 7.2 L0.2 3.8 Q-0.1 3.4 0.4 3.4 L2.2 3.4 Z" fill="#ee5a2c" stroke="#c0401a" stroke-width="0.5" stroke-linejoin="round"/><path d="M3.2 1.2 L5.2 1.2 L5.2 3.9 L6.4 3.9 L4.2 5.9 L2 3.9 L3.2 3.9 Z" fill="#ffb090" opacity="0.55"/></svg>
<div class="t" style="left:16.60px;top:181px;font-size:10.99px;color:#1c1c1c;transform:scale(0.7207,0.81);transform-origin:0 0;-webkit-text-stroke-width:0.3px;">AUDCAD</div>
<div class="t" style="right:107.70px;top:180px;font-size:11.60px;color:#e2303a;transform:scale(0.7328,0.81);transform-origin:100% 0;-webkit-text-stroke-width:0.3px;">0.8921</div>
<div class="t" style="right:5.20px;top:180px;font-size:11.60px;color:#e2303a;transform:scale(0.7328,0.81);transform-origin:100% 0;-webkit-text-stroke-width:0.3px;">0.8929</div>
<div class="b" style="left:0.00px;top:194.30px;width:362.00px;height:16.15px;background:#c6e0fa"></div>
<div class="b" style="left:0.00px;top:209.45px;width:362.00px;height:1.00px;background:#c9c9c9"></div>
<div class="b" style="left:155.20px;top:194.30px;width:1.00px;height:16.15px;background:#cfcfcf"></div>
<div class="b" style="left:257.20px;top:194.30px;width:1.00px;height:16.15px;background:#cfcfcf"></div>
<svg class="b" style="left:3.8px;top:197.50px" width="8.6" height="7.7" viewBox="0 0 8.6 7.7"><path d="M2.2 0.3 L6.2 0.3 L6.2 3.4 L8 3.4 Q8.5 3.4 8.2 3.8 L4.2 7.2 L0.2 3.8 Q-0.1 3.4 0.4 3.4 L2.2 3.4 Z" fill="#ee5a2c" stroke="#c0401a" stroke-width="0.5" stroke-linejoin="round"/><path d="M3.2 1.2 L5.2 1.2 L5.2 3.9 L6.4 3.9 L4.2 5.9 L2 3.9 L3.2 3.9 Z" fill="#ffb090" opacity="0.55"/></svg>
<div class="t" style="left:16.60px;top:197px;font-size:10.99px;color:#1c1c1c;transform:scale(0.7207,0.81);transform-origin:0 0;-webkit-text-stroke-width:0.3px;">AUDCHF</div>
<div class="t" style="right:107.70px;top:197px;font-size:11.60px;color:#e2303a;transform:scale(0.7328,0.81);transform-origin:100% 0;-webkit-text-stroke-width:0.3px;">0.6499</div>
<div class="t" style="right:5.20px;top:197px;font-size:11.60px;color:#e2303a;transform:scale(0.7328,0.81);transform-origin:100% 0;-webkit-text-stroke-width:0.3px;">0.6507</div>
<div class="b" style="left:0.00px;top:210.45px;width:362.00px;height:16.15px;background:#c6e0fa"></div>
<div class="b" style="left:0.00px;top:225.60px;width:362.00px;height:1.00px;background:#c9c9c9"></div>
<div class="b" style="left:155.20px;top:210.45px;width:1.00px;height:16.15px;background:#cfcfcf"></div>
<div class="b" style="left:257.20px;top:210.45px;width:1.00px;height:16.15px;background:#cfcfcf"></div>
<svg class="b" style="left:3.8px;top:213.65px" width="8.6" height="7.7" viewBox="0 0 8.6 7.7"><path d="M2.2 0.3 L6.2 0.3 L6.2 3.4 L8 3.4 Q8.5 3.4 8.2 3.8 L4.2 7.2 L0.2 3.8 Q-0.1 3.4 0.4 3.4 L2.2 3.4 Z" fill="#ee5a2c" stroke="#c0401a" stroke-width="0.5" stroke-linejoin="round"/><path d="M3.2 1.2 L5.2 1.2 L5.2 3.9 L6.4 3.9 L4.2 5.9 L2 3.9 L3.2 3.9 Z" fill="#ffb090" opacity="0.55"/></svg>
<div class="t" style="left:16.60px;top:214px;font-size:10.99px;color:#1c1c1c;transform:scale(0.7207,0.81);transform-origin:0 0;-webkit-text-stroke-width:0.3px;">AUDJPY</div>
<div class="t" style="right:107.70px;top:213px;font-size:11.60px;color:#e2303a;transform:scale(0.7328,0.81);transform-origin:100% 0;-webkit-text-stroke-width:0.3px;">73.06</div>
<div class="t" style="right:5.20px;top:213px;font-size:11.60px;color:#e2303a;transform:scale(0.7328,0.81);transform-origin:100% 0;-webkit-text-stroke-width:0.3px;">73.14</div>
<div class="b" style="left:0.00px;top:226.60px;width:362.00px;height:16.15px;background:#c6e0fa"></div>
<div class="b" style="left:0.00px;top:241.75px;width:362.00px;height:1.00px;background:#c9c9c9"></div>
<div class="b" style="left:155.20px;top:226.60px;width:1.00px;height:16.15px;background:#cfcfcf"></div>
<div class="b" style="left:257.20px;top:226.60px;width:1.00px;height:16.15px;background:#cfcfcf"></div>
<svg class="b" style="left:3.8px;top:229.80px" width="8.6" height="7.7" viewBox="0 0 8.6 7.7"><path d="M4.2 0.3 L8.2 4.2 Q8.5 4.6 8 4.6 L6.2 4.6 L6.2 7.4 L2.2 7.4 L2.2 4.6 L0.4 4.6 Q-0.1 4.6 0.2 4.2 Z" fill="#1eaa1e" stroke="#118a11" stroke-width="0.5" stroke-linejoin="round"/><path d="M4.2 1.6 L6.4 3.9 L5.2 3.9 L5.2 6.4 L3.2 6.4 L3.2 3.9 L2 3.9 Z" fill="#8ae88a" opacity="0.6"/></svg>
<div class="t" style="left:16.60px;top:230px;font-size:10.99px;color:#1c1c1c;transform:scale(0.7207,0.81);transform-origin:0 0;-webkit-text-stroke-width:0.3px;">CADCHF</div>
<div class="t" style="right:107.70px;top:229px;font-size:11.60px;color:#2b30c0;transform:scale(0.7328,0.81);transform-origin:100% 0;-webkit-text-stroke-width:0.3px;">0.7279</div>
<div class="t" style="right:5.20px;top:229px;font-size:11.60px;color:#2b30c0;transform:scale(0.7328,0.81);transform-origin:100% 0;-webkit-text-stroke-width:0.3px;">0.7287</div>
<div class="b" style="left:0.00px;top:242.75px;width:362.00px;height:16.15px;background:#c6e0fa"></div>
<div class="b" style="left:0.00px;top:257.90px;width:362.00px;height:1.00px;background:#c9c9c9"></div>
<div class="b" style="left:155.20px;top:242.75px;width:1.00px;height:16.15px;background:#cfcfcf"></div>
<div class="b" style="left:257.20px;top:242.75px;width:1.00px;height:16.15px;background:#cfcfcf"></div>
<svg class="b" style="left:3.8px;top:245.95px" width="8.6" height="7.7" viewBox="0 0 8.6 7.7"><path d="M2.2 0.3 L6.2 0.3 L6.2 3.4 L8 3.4 Q8.5 3.4 8.2 3.8 L4.2 7.2 L0.2 3.8 Q-0.1 3.4 0.4 3.4 L2.2 3.4 Z" fill="#ee5a2c" stroke="#c0401a" stroke-width="0.5" stroke-linejoin="round"/><path d="M3.2 1.2 L5.2 1.2 L5.2 3.9 L6.4 3.9 L4.2 5.9 L2 3.9 L3.2 3.9 Z" fill="#ffb090" opacity="0.55"/></svg>
<div class="t" style="left:16.60px;top:246px;font-size:10.99px;color:#1c1c1c;transform:scale(0.7207,0.81);transform-origin:0 0;-webkit-text-stroke-width:0.3px;">CADJPY</div>
<div class="t" style="right:107.70px;top:245px;font-size:11.60px;color:#e2303a;transform:scale(0.7328,0.81);transform-origin:100% 0;-webkit-text-stroke-width:0.3px;">81.91</div>
<div class="t" style="right:5.20px;top:245px;font-size:11.60px;color:#e2303a;transform:scale(0.7328,0.81);transform-origin:100% 0;-webkit-text-stroke-width:0.3px;">81.99</div>
<div class="b" style="left:0.00px;top:258.90px;width:362.00px;height:16.15px;background:#c6e0fa"></div>
<div class="b" style="left:0.00px;top:274.05px;width:362.00px;height:1.00px;background:#c9c9c9"></div>
<div class="b" style="left:155.20px;top:258.90px;width:1.00px;height:16.15px;background:#cfcfcf"></div>
<div class="b" style="left:257.20px;top:258.90px;width:1.00px;height:16.15px;background:#cfcfcf"></div>
<svg class="b" style="left:3.8px;top:262.10px" width="8.6" height="7.7" viewBox="0 0 8.6 7.7"><path d="M2.2 0.3 L6.2 0.3 L6.2 3.4 L8 3.4 Q8.5 3.4 8.2 3.8 L4.2 7.2 L0.2 3.8 Q-0.1 3.4 0.4 3.4 L2.2 3.4 Z" fill="#ee5a2c" stroke="#c0401a" stroke-width="0.5" stroke-linejoin="round"/><path d="M3.2 1.2 L5.2 1.2 L5.2 3.9 L6.4 3.9 L4.2 5.9 L2 3.9 L3.2 3.9 Z" fill="#ffb090" opacity="0.55"/></svg>
<div class="t" style="left:16.60px;top:262px;font-size:10.99px;color:#1c1c1c;transform:scale(0.7207,0.81);transform-origin:0 0;-webkit-text-stroke-width:0.3px;">CHFJPY</div>
<div class="t" style="right:107.70px;top:261px;font-size:11.60px;color:#e2303a;transform:scale(0.7328,0.81);transform-origin:100% 0;-webkit-text-stroke-width:0.3px;">112.36</div>
<div class="t" style="right:5.20px;top:261px;font-size:11.60px;color:#e2303a;transform:scale(0.7328,0.81);transform-origin:100% 0;-webkit-text-stroke-width:0.3px;">112.44</div>
<div class="b" style="left:0.00px;top:275.05px;width:362.00px;height:16.15px;background:#c6e0fa"></div>
<div class="b" style="left:0.00px;top:290.20px;width:362.00px;height:1.00px;background:#c9c9c9"></div>
<div class="b" style="left:155.20px;top:275.05px;width:1.00px;height:16.15px;background:#cfcfcf"></div>
<div class="b" style="left:257.20px;top:275.05px;width:1.00px;height:16.15px;background:#cfcfcf"></div>
<svg class="b" style="left:3.8px;top:278.25px" width="8.6" height="7.7" viewBox="0 0 8.6 7.7"><path d="M2.2 0.3 L6.2 0.3 L6.2 3.4 L8 3.4 Q8.5 3.4 8.2 3.8 L4.2 7.2 L0.2 3.8 Q-0.1 3.4 0.4 3.4 L2.2 3.4 Z" fill="#ee5a2c" stroke="#c0401a" stroke-width="0.5" stroke-linejoin="round"/><path d="M3.2 1.2 L5.2 1.2 L5.2 3.9 L6.4 3.9 L4.2 5.9 L2 3.9 L3.2 3.9 Z" fill="#ffb090" opacity="0.55"/></svg>
<div class="t" style="left:16.60px;top:278px;font-size:10.99px;color:#1c1c1c;transform:scale(0.7207,0.81);transform-origin:0 0;-webkit-text-stroke-width:0.3px;">NZDCAD</div>
<div class="t" style="right:107.70px;top:277px;font-size:11.60px;color:#e2303a;transform:scale(0.7328,0.81);transform-origin:100% 0;-webkit-text-stroke-width:0.3px;">0.8590</div>
<div class="t" style="right:5.20px;top:277px;font-size:11.60px;color:#e2303a;transform:scale(0.7328,0.81);transform-origin:100% 0;-webkit-text-stroke-width:0.3px;">0.8598</div>
</div>
<div class="b" style="left:365.80px;top:77.80px;width:13.00px;height:308.50px;background:#f0f0f0"></div>
<div class="b" style="left:366.80px;top:92.00px;width:11.00px;height:12.20px;background:#c3c3c3"></div>
<svg class="b" style="left:368.3px;top:82.6px" width="8" height="5" viewBox="0 0 8 5"><path d="M0.7 4.3 L4 1 L7.3 4.3" stroke="#2a2a2a" stroke-width="1.25" fill="none"/></svg>
<svg class="b" style="left:368.6px;top:377.0px" width="8" height="5" viewBox="0 0 8 5"><path d="M0.7 0.7 L4 4 L7.3 0.7" stroke="#2a2a2a" stroke-width="1.25" fill="none"/></svg>
<div class="b" style="left:3.00px;top:385.80px;width:375.50px;height:1.30px;background:#2e2e2e"></div>
<div class="b" style="left:5.8px;top:386.5px;width:52.4px;height:14px;background:#fff;border:1.2px solid #2e2e2e;border-top:none;box-sizing:border-box"></div>
<div class="t" style="left:13.30px;top:389px;font-size:10.62px;color:#151515;transform:scale(0.806,0.81);transform-origin:0 0;-webkit-text-stroke-width:0.3px;">Символы</div>
<div class="t" style="left:65.80px;top:389px;font-size:11.36px;color:#6f6f6f;transform:scale(0.7905,0.81);transform-origin:0 0;-webkit-text-stroke-width:0.3px;">Тиковый график</div>
<div class="b" style="left:142.30px;top:388.60px;width:1.00px;height:10.60px;background:#9a9a9a"></div>
<div class="b" style="left:3.00px;top:403.70px;width:379.00px;height:1.00px;background:#c4c4c4"></div>
<div class="b" style="left:381.60px;top:63.50px;width:1.20px;height:324.00px;background:#9d9d9d"></div>
<div class="b" style="left:380.60px;top:387.50px;width:1.00px;height:17.00px;background:#c8c8c8"></div>
<div class="b" style="left:383.00px;top:64.00px;width:514.00px;height:325.00px;background:#fff"></div>
<div class="b" style="left:897.00px;top:64.00px;width:2.00px;height:345.00px;background:#e3e3e3"></div>
<div class="t" style="right:411.50px;top:73px;font-size:11.85px;color:#1a1a1a;transform:scale(0.7173,0.81);transform-origin:100% 0;-webkit-text-stroke-width:0.1px;">Символ:</div>
<div class="b" style="left:494.40px;top:71.20px;width:339.20px;height:16.80px;background:#e5e5e5;border:1px solid #adadad;box-sizing:border-box"></div>
<svg class="b" style="left:822.10px;top:77.60px" width="8" height="5" viewBox="0 0 8 5"><path d="M0.5 0.7 L4 4.1 L7.5 0.7" stroke="#3a3a3a" stroke-width="1" fill="none"/></svg>
<div class="t" style="left:498.70px;top:75px;font-size:12.35px;color:#151515;transform:scale(0.6915,0.81);transform-origin:0 0;-webkit-text-stroke-width:0.1px;">GBPNZD,&nbsp; Great Britain Pound vs New Zealand Dollar</div>
<div class="t" style="right:411.50px;top:96px;font-size:11.85px;color:#1a1a1a;transform:scale(0.7342,0.81);transform-origin:100% 0;-webkit-text-stroke-width:0.1px;">Стоп лосс:</div>
<div class="b" style="left:494.40px;top:91.20px;width:67.20px;height:16.00px;background:#fff;border:1px solid #7a7a7a;box-sizing:border-box"></div>
<div class="b" style="left:548.30px;top:92.00px;width:12.60px;height:14.40px;background:#eaeaea;border:1px solid #b8b8b8;box-sizing:border-box"></div>
<div class="b" style="left:549.00px;top:98.80px;width:11.20px;height:0.80px;background:#b8b8b8"></div>
<svg class="b" style="left:551.40px;top:93.60px" width="6.6" height="11" viewBox="0 0 6.6 11"><path d="M3.3 0.8 L6 3.8 L0.6 3.8 Z M3.3 10.2 L6 7.2 L0.6 7.2 Z" fill="#1e1e1e"/></svg>
<div class="t" style="right:353.00px;top:95px;font-size:12.59px;color:#151515;transform:scale(0.7069,0.81);transform-origin:100% 0;-webkit-text-stroke-width:0.1px;">0.0000</div>
<div class="t" style="right:138.60px;top:96px;font-size:11.85px;color:#1a1a1a;transform:scale(0.746,0.81);transform-origin:100% 0;-webkit-text-stroke-width:0.1px;">Тейк профит:</div>
<div class="b" style="left:767.20px;top:91.20px;width:66.40px;height:16.00px;background:#fff;border:1px solid #7a7a7a;box-sizing:border-box"></div>
<div class="b" style="left:820.30px;top:92.00px;width:12.60px;height:14.40px;background:#eaeaea;border:1px solid #b8b8b8;box-sizing:border-box"></div>
<div class="b" style="left:821.00px;top:98.80px;width:11.20px;height:0.80px;background:#b8b8b8"></div>
<svg class="b" style="left:823.40px;top:93.60px" width="6.6" height="11" viewBox="0 0 6.6 11"><path d="M3.3 0.8 L6 3.8 L0.6 3.8 Z M3.3 10.2 L6 7.2 L0.6 7.2 Z" fill="#1e1e1e"/></svg>
<div class="t" style="right:80.20px;top:95px;font-size:12.59px;color:#151515;transform:scale(0.7069,0.81);transform-origin:100% 0;-webkit-text-stroke-width:0.1px;">0.0000</div>
<div class="t" style="right:411.50px;top:115px;font-size:11.85px;color:#1a1a1a;transform:scale(0.7536,0.81);transform-origin:100% 0;-webkit-text-stroke-width:0.1px;">Комментарий:</div>
<div class="b" style="left:494.40px;top:110.80px;width:339.20px;height:15.80px;background:#fff;border:1px solid #7a7a7a;box-sizing:border-box"></div>
<div class="t" style="right:411.50px;top:135px;font-size:11.85px;color:#1a1a1a;transform:scale(0.7257,0.81);transform-origin:100% 0;-webkit-text-stroke-width:0.1px;">Объем:</div>
<div class="b" style="left:494.40px;top:130.30px;width:67.20px;height:16.70px;background:#fff;border:1px solid #7a7a7a;box-sizing:border-box"></div>
<svg class="b" style="left:550.10px;top:136.65px" width="8" height="5" viewBox="0 0 8 5"><path d="M0.5 0.7 L4 4.1 L7.5 0.7" stroke="#3a3a3a" stroke-width="1" fill="none"/></svg>
<div class="t" style="left:498.00px;top:133px;font-size:12.35px;color:#151515;transform:scale(0.7206,0.81);transform-origin:0 0;-webkit-text-stroke-width:0.1px;">10.00</div>
<div class="t" style="left:586.40px;top:135px;font-size:11.85px;color:#1a1a1a;transform:scale(0.73,0.81);transform-origin:0 0;-webkit-text-stroke-width:0.1px;">Распределение:</div>
<div class="b" style="left:658.80px;top:130.50px;width:174.80px;height:16.10px;background:#e5e5e5;border:1px solid #adadad;box-sizing:border-box"></div>
<svg class="b" style="left:822.10px;top:136.55px" width="8" height="5" viewBox="0 0 8 5"><path d="M0.5 0.7 L4 4.1 L7.5 0.7" stroke="#3a3a3a" stroke-width="1" fill="none"/></svg>
<div class="t" style="left:662.50px;top:134px;font-size:12.35px;color:#151515;transform:scale(0.7174,0.81);transform-origin:0 0;-webkit-text-stroke-width:0.1px;">общий объем для каждого ордера</div>
<div class="t" style="left:573.90px;top:155px;font-size:11.85px;color:#1a1a1a;transform:scale(0.7426,0.81);transform-origin:0 0;-webkit-text-stroke-width:0.1px;">Максимальное отклонение от запрошенной цены:</div>
<div class="b" style="left:785.00px;top:151.30px;width:48.60px;height:15.90px;background:#fff;border:1px solid #7a7a7a;box-sizing:border-box"></div>
<svg class="b" style="left:822.10px;top:157.25px" width="8" height="5" viewBox="0 0 8 5"><path d="M0.5 0.7 L4 4.1 L7.5 0.7" stroke="#3a3a3a" stroke-width="1" fill="none"/></svg>
<div class="t" style="left:788.50px;top:154px;font-size:12.35px;color:#151515;transform:scale(0.7206,0.81);transform-origin:0 0;-webkit-text-stroke-width:0.1px;">5</div>
<div class="t" style="left:838.00px;top:155px;font-size:11.85px;color:#1a1a1a;transform:scale(0.762,0.81);transform-origin:0 0;-webkit-text-stroke-width:0.1px;">пунктов</div>
<div class="b" style="left:534.40px;top:173.40px;width:101.40px;height:16.30px;background:#fb7b80;border:1px solid #b9b9b9;box-shadow:inset 0 0 0 0.8px #ececec;box-sizing:border-box"></div>
<div class="t" style="left:285.20px;width:600px;text-align:center;top:178px;font-size:11.85px;color:#151515;transform:scale(0.7257,0.81);transform-origin:50% 0;-webkit-text-stroke-width:0.1px;">Sell</div>
<div class="b" style="left:643.00px;top:173.20px;width:101.70px;height:16.00px;background:#a0bdf8;border:1px solid #b9b9b9;box-shadow:inset 0 0 0 0.8px #ececec;box-sizing:border-box"></div>
<div class="t" style="left:393.80px;width:600px;text-align:center;top:178px;font-size:11.85px;color:#151515;transform:scale(0.7257,0.81);transform-origin:50% 0;-webkit-text-stroke-width:0.1px;">Buy</div>
<div class="b" style="left:511.20px;top:198.70px;width:1.00px;height:17.70px;background:#e8e8e8"></div>
<div class="b" style="left:716.30px;top:198.70px;width:1.00px;height:17.70px;background:#e8e8e8"></div>
<div class="b" style="left:766.90px;top:198.70px;width:1.00px;height:17.70px;background:#e8e8e8"></div>
<div class="b" style="left:383.00px;top:216.20px;width:514.00px;height:1.00px;background:#d6d6d6"></div>
<div class="t" style="left:388.70px;top:203px;font-size:11.11px;color:#151515;transform:scale(0.7741,0.81);transform-origin:0 0;-webkit-text-stroke-width:0.4px;">Счет</div>
<div class="t" style="left:313.90px;width:600px;text-align:center;top:203px;font-size:11.11px;color:#151515;transform:scale(0.7741,0.81);transform-origin:50% 0;-webkit-text-stroke-width:0.4px;">Статус</div>
<div class="t" style="right:137.40px;top:203px;font-size:11.11px;color:#151515;transform:scale(0.8245,0.81);transform-origin:100% 0;-webkit-text-stroke-width:0.4px;">Объем</div>
<div class="t" style="left:531.90px;width:600px;text-align:center;top:203px;font-size:11.11px;color:#151515;transform:scale(0.8164,0.81);transform-origin:50% 0;-webkit-text-stroke-width:0.4px;">Действие</div>
<div class="b" style="left:383.00px;top:217.50px;width:514.00px;height:19.10px;background:#ebebeb"></div>
<div class="b" style="left:383.00px;top:235.80px;width:384.00px;height:0.90px;background:#d2d2d2"></div>
<div class="b" style="left:511.20px;top:217.50px;width:1.00px;height:19.10px;background:#d2d2d2"></div>
<div class="b" style="left:716.30px;top:217.50px;width:1.00px;height:19.10px;background:#d2d2d2"></div>
<div class="b" style="left:766.90px;top:217.50px;width:1.00px;height:19.10px;background:#d2d2d2"></div>
<div class="b" style="left:388.40px;top:222.10px;width:10.00px;height:9.60px;background:#fff;border-top:1.5px solid #3a3a3a;border-left:1.5px solid #3a3a3a;border-right:1px solid #d8d8d8;border-bottom:1px solid #d8d8d8;box-sizing:border-box"></div>
<svg class="b" style="left:389.8px;top:223.50px" width="8" height="8" viewBox="0 0 8 8"><path d="M0.8 3.4 L2.8 5.8 L6.8 1.2" stroke="#1aa01a" stroke-width="1.5" fill="none"/></svg>
<div class="t" style="left:404.60px;top:223px;font-size:10.99px;color:#111;transform:scale(0.7807,0.81);transform-origin:0 0;-webkit-text-stroke-width:0.3px;font-weight:bold;">64377234, Ku Tasut</div>
<div class="t" style="left:314.20px;width:600px;text-align:center;top:222px;font-size:11.60px;color:#151515;transform:scale(0.7569,0.81);transform-origin:50% 0;-webkit-text-stroke-width:0.3px;">2.0065 / 2.0077</div>
<div class="t" style="right:137.00px;top:222px;font-size:11.60px;color:#151515;transform:scale(0.7672,0.81);transform-origin:100% 0;-webkit-text-stroke-width:0.3px;">10.00</div>
<div class="b" style="left:768.60px;top:218.60px;width:61.60px;height:16.60px;background:#fb7b80;border:1px solid #b9b9b9;box-shadow:inset 0 0 0 0.8px #ececec;box-sizing:border-box"></div>
<div class="t" style="left:499.40px;width:600px;text-align:center;top:223px;font-size:11.48px;color:#151515;transform:scale(0.7491,0.81);transform-origin:50% 0;-webkit-text-stroke-width:0.3px;">Sell</div>
<div class="b" style="left:833.00px;top:218.60px;width:63.40px;height:16.60px;background:#a0bdf8;border:1px solid #b9b9b9;box-shadow:inset 0 0 0 0.8px #ececec;box-sizing:border-box"></div>
<div class="t" style="left:564.70px;width:600px;text-align:center;top:223px;font-size:11.48px;color:#151515;transform:scale(0.7491,0.81);transform-origin:50% 0;-webkit-text-stroke-width:0.3px;">Buy</div>
<div class="b" style="left:383.00px;top:236.60px;width:514.00px;height:19.10px;background:#fff"></div>
<div class="b" style="left:383.00px;top:254.90px;width:384.00px;height:0.90px;background:#d2d2d2"></div>
<div class="b" style="left:511.20px;top:236.60px;width:1.00px;height:19.10px;background:#d2d2d2"></div>
<div class="b" style="left:716.30px;top:236.60px;width:1.00px;height:19.10px;background:#d2d2d2"></div>
<div class="b" style="left:766.90px;top:236.60px;width:1.00px;height:19.10px;background:#d2d2d2"></div>
<div class="b" style="left:388.40px;top:241.20px;width:10.00px;height:9.60px;background:#fff;border-top:1.5px solid #3a3a3a;border-left:1.5px solid #3a3a3a;border-right:1px solid #d8d8d8;border-bottom:1px solid #d8d8d8;box-sizing:border-box"></div>
<svg class="b" style="left:389.8px;top:242.60px" width="8" height="8" viewBox="0 0 8 8"><path d="M0.8 3.4 L2.8 5.8 L6.8 1.2" stroke="#1aa01a" stroke-width="1.5" fill="none"/></svg>
<div class="t" style="left:404.60px;top:242px;font-size:10.99px;color:#111;transform:scale(0.7807,0.81);transform-origin:0 0;-webkit-text-stroke-width:0.3px;font-weight:bold;">64377238, Sa Kasut</div>
<div class="t" style="left:314.20px;width:600px;text-align:center;top:241px;font-size:11.60px;color:#151515;transform:scale(0.7569,0.81);transform-origin:50% 0;-webkit-text-stroke-width:0.3px;">2.0065 / 2.0077</div>
<div class="t" style="right:137.00px;top:241px;font-size:11.60px;color:#151515;transform:scale(0.7672,0.81);transform-origin:100% 0;-webkit-text-stroke-width:0.3px;">10.00</div>
<div class="b" style="left:768.60px;top:237.70px;width:61.60px;height:16.60px;background:#fb7b80;border:1px solid #b9b9b9;box-shadow:inset 0 0 0 0.8px #ececec;box-sizing:border-box"></div>
<div class="t" style="left:499.40px;width:600px;text-align:center;top:242px;font-size:11.48px;color:#151515;transform:scale(0.7491,0.81);transform-origin:50% 0;-webkit-text-stroke-width:0.3px;">Sell</div>
<div class="b" style="left:833.00px;top:237.70px;width:63.40px;height:16.60px;background:#a0bdf8;border:1px solid #b9b9b9;box-shadow:inset 0 0 0 0.8px #ececec;box-sizing:border-box"></div>
<div class="t" style="left:564.70px;width:600px;text-align:center;top:242px;font-size:11.48px;color:#151515;transform:scale(0.7491,0.81);transform-origin:50% 0;-webkit-text-stroke-width:0.3px;">Buy</div>
<div class="b" style="left:382.00px;top:388.80px;width:515.50px;height:1.30px;background:#2e2e2e"></div>
<div class="t" style="left:391.00px;top:393px;font-size:11.11px;color:#6f6f6f;transform:scale(0.7975,0.81);transform-origin:0 0;-webkit-text-stroke-width:0.3px;">Ордеры</div>
<div class="b" style="left:432.60px;top:392.60px;width:1.00px;height:10.70px;background:#9a9a9a"></div>
<div class="t" style="left:440.00px;top:393px;font-size:11.11px;color:#6f6f6f;transform:scale(0.7975,0.81);transform-origin:0 0;-webkit-text-stroke-width:0.3px;">История: 2</div>
<div class="b" style="left:493.6px;top:389.5px;width:52.8px;height:14.8px;background:#fff;border:1.2px solid #2e2e2e;border-top:none;box-sizing:border-box"></div>
<div class="t" style="left:500.60px;top:393px;font-size:11.11px;color:#151515;transform:scale(0.8083,0.81);transform-origin:0 0;-webkit-text-stroke-width:0.3px;">Новый: 2</div>
<div class="t" style="left:553.40px;top:393px;font-size:11.11px;color:#6f6f6f;transform:scale(0.8011,0.81);transform-origin:0 0;-webkit-text-stroke-width:0.3px;">Закрыть</div>
<div class="b" style="left:598.20px;top:392.60px;width:1.00px;height:10.70px;background:#9a9a9a"></div>
<div class="t" style="left:605.40px;top:393px;font-size:11.11px;color:#6f6f6f;transform:scale(0.8011,0.81);transform-origin:0 0;-webkit-text-stroke-width:0.3px;">Встречные</div>
<div class="b" style="left:657.80px;top:392.60px;width:1.00px;height:10.70px;background:#9a9a9a"></div>
<div class="t" style="left:666.00px;top:393px;font-size:11.11px;color:#6f6f6f;transform:scale(0.8029,0.81);transform-origin:0 0;-webkit-text-stroke-width:0.3px;">Перекрытые</div>
<div class="b" style="left:727.30px;top:392.60px;width:1.00px;height:10.70px;background:#9a9a9a"></div>
<div class="t" style="left:734.80px;top:393px;font-size:11.11px;color:#6f6f6f;transform:scale(0.8146,0.81);transform-origin:0 0;-webkit-text-stroke-width:0.3px;">Отложенный: 2</div>
<div class="b" style="left:807.60px;top:392.60px;width:1.00px;height:10.70px;background:#9a9a9a"></div>
<div class="t" style="left:814.90px;top:393px;font-size:11.11px;color:#6f6f6f;transform:scale(0.7651,0.81);transform-origin:0 0;-webkit-text-stroke-width:0.3px;">Изменить</div>
<div class="b" style="left:862.30px;top:392.60px;width:1.00px;height:10.70px;background:#9a9a9a"></div>
<div class="t" style="left:869.80px;top:393px;font-size:11.11px;color:#6f6f6f;transform:scale(0.8011,0.81);transform-origin:0 0;-webkit-text-stroke-width:0.3px;">Удалить</div>
<div class="b" style="left:897.00px;top:389.00px;width:2.00px;height:18.00px;background:#f0f0f0"></div>
<div class="b" style="left:1.00px;top:404.40px;width:898.00px;height:160.00px;background:#f0f0f0"></div>
<div class="b" style="left:3.00px;top:403.70px;width:379.00px;height:1.00px;background:#c4c4c4"></div>
<div class="b" style="left:3.00px;top:404.80px;width:433.00px;height:2.60px;background:#f9f9f9"></div>
<svg class="b" style="left:3.8px;top:410.8px" width="6.4" height="5" viewBox="0 0 6.4 5"><path d="M0.7 0.5 L5.7 4.5 M5.7 0.5 L0.7 4.5" stroke="#111" stroke-width="1.25"/></svg>
<div class="b" style="left:3.00px;top:419.70px;width:9.30px;height:141.60px;background:#c2d4e6"></div>
<div class="t" style="left:3.6px;top:560.8px;font-size:10.1px;line-height:10px;color:#151515;-webkit-text-stroke-width:0.45px;transform-origin:0 0;transform:rotate(-90deg) scaleX(0.868)">Инструментарий</div>
<div class="b" style="left:12.20px;top:408.40px;width:1.00px;height:138.00px;background:#a3a3a3"></div>
<div class="b" style="left:13.00px;top:408.10px;width:420.50px;height:1.20px;background:#bcbcbc"></div>
<div class="b" style="left:13.00px;top:409.40px;width:420.50px;height:137.00px;background:#fff"></div>
<div class="b" style="left:131.60px;top:409.40px;width:1.00px;height:19.60px;background:#e8e8e8"></div>
<div class="t" style="left:18.90px;top:415px;font-size:10.99px;color:#1a1a1a;transform:scale(0.8162,0.81);transform-origin:0 0;-webkit-text-stroke-width:0.3px;">Время</div>
<div class="t" style="left:136.70px;top:415px;font-size:10.99px;color:#1a1a1a;transform:scale(0.8162,0.81);transform-origin:0 0;-webkit-text-stroke-width:0.3px;">Тема</div>
<div class="b" style="left:13px;top:429px;width:407.4px;height:117.4px;overflow:hidden">
<div class="b" style="left:0.00px;top:-0.60px;width:407.40px;height:16.12px;background:#ebebeb"></div>
<div class="b" style="left:0.00px;top:14.62px;width:407.40px;height:0.90px;background:#d9d9d9"></div>
<div class="b" style="left:118.60px;top:-0.60px;width:1.00px;height:16.12px;background:#d9d9d9"></div>
<svg class="b" style="left:5px;top:2.10px" width="9" height="9.4" viewBox="0 0 9 9.4"><defs><linearGradient id="ng0" x1="0" y1="0" x2="0" y2="1"><stop offset="0" stop-color="#f6d860"/><stop offset="1" stop-color="#e2ad12"/></linearGradient></defs><rect x="0.4" y="0.4" width="8.2" height="8.6" rx="0.8" fill="url(#ng0)" stroke="#c89a10" stroke-width="0.7"/><path d="M2.2 3 H6.8 M2.2 4.7 H6.8 M2.2 6.4 H6.8 M3.2 2 V7.4 M5.8 2 V7.4" stroke="#fbeaa0" stroke-width="0.45" opacity="0.8"/></svg>
<div class="t" style="left:18.70px;top:2px;font-size:11.98px;color:#1a1a1a;transform:scale(0.7187,0.81);transform-origin:0 0;-webkit-text-stroke-width:0.3px;">2020.02.04 09:21:23</div>
<div class="t" style="left:122.90px;top:2px;font-size:11.98px;color:#1a1a1a;transform:scale(0.7688,0.81);transform-origin:0 0;-webkit-text-stroke-width:0.3px;">Indian Rupee Spikes Up To Near 2-week High Against U.S. Dollar</div>
<div class="b" style="left:0.00px;top:15.52px;width:407.40px;height:16.12px;background:#fff"></div>
<div class="b" style="left:0.00px;top:30.74px;width:407.40px;height:0.90px;background:#d9d9d9"></div>
<div class="b" style="left:118.60px;top:15.52px;width:1.00px;height:16.12px;background:#d9d9d9"></div>
<svg class="b" style="left:5px;top:18.22px" width="9" height="9.4" viewBox="0 0 9 9.4"><defs><linearGradient id="ng1" x1="0" y1="0" x2="0" y2="1"><stop offset="0" stop-color="#f6d860"/><stop offset="1" stop-color="#e2ad12"/></linearGradient></defs><rect x="0.4" y="0.4" width="8.2" height="8.6" rx="0.8" fill="url(#ng1)" stroke="#c89a10" stroke-width="0.7"/><path d="M2.2 3 H6.8 M2.2 4.7 H6.8 M2.2 6.4 H6.8 M3.2 2 V7.4 M5.8 2 V7.4" stroke="#fbeaa0" stroke-width="0.45" opacity="0.8"/></svg>
<div class="t" style="left:18.70px;top:18px;font-size:11.98px;color:#1a1a1a;transform:scale(0.7187,0.81);transform-origin:0 0;-webkit-text-stroke-width:0.3px;">2020.02.04 09:04:23</div>
<div class="t" style="left:122.90px;top:18px;font-size:11.98px;color:#1a1a1a;transform:scale(0.7613,0.81);transform-origin:0 0;-webkit-text-stroke-width:0.3px;">*Indian Rupee Rises To Near 2-week High Of 71.07 Against U.S. D...</div>
<div class="b" style="left:0.00px;top:31.64px;width:407.40px;height:16.12px;background:#ebebeb"></div>
<div class="b" style="left:0.00px;top:46.86px;width:407.40px;height:0.90px;background:#d9d9d9"></div>
<div class="b" style="left:118.60px;top:31.64px;width:1.00px;height:16.12px;background:#d9d9d9"></div>
<svg class="b" style="left:5px;top:34.34px" width="9" height="9.4" viewBox="0 0 9 9.4"><defs><linearGradient id="ng2" x1="0" y1="0" x2="0" y2="1"><stop offset="0" stop-color="#f6d860"/><stop offset="1" stop-color="#e2ad12"/></linearGradient></defs><rect x="0.4" y="0.4" width="8.2" height="8.6" rx="0.8" fill="url(#ng2)" stroke="#c89a10" stroke-width="0.7"/><path d="M2.2 3 H6.8 M2.2 4.7 H6.8 M2.2 6.4 H6.8 M3.2 2 V7.4 M5.8 2 V7.4" stroke="#fbeaa0" stroke-width="0.45" opacity="0.8"/></svg>
<div class="t" style="left:18.70px;top:34px;font-size:11.98px;color:#1a1a1a;transform:scale(0.7187,0.81);transform-origin:0 0;-webkit-text-stroke-width:0.3px;">2020.02.04 09:03:23</div>
<div class="t" style="left:122.90px;top:34px;font-size:11.98px;color:#1a1a1a;transform:scale(0.7571,0.81);transform-origin:0 0;-webkit-text-stroke-width:0.3px;">*Romania Dec Producer Prices Up 0.3% On Month</div>
<div class="b" style="left:0.00px;top:47.76px;width:407.40px;height:16.12px;background:#fff"></div>
<div class="b" style="left:0.00px;top:62.98px;width:407.40px;height:0.90px;background:#d9d9d9"></div>
<div class="b" style="left:118.60px;top:47.76px;width:1.00px;height:16.12px;background:#d9d9d9"></div>
<svg class="b" style="left:5px;top:50.46px" width="9" height="9.4" viewBox="0 0 9 9.4"><defs><linearGradient id="ng3" x1="0" y1="0" x2="0" y2="1"><stop offset="0" stop-color="#f6d860"/><stop offset="1" stop-color="#e2ad12"/></linearGradient></defs><rect x="0.4" y="0.4" width="8.2" height="8.6" rx="0.8" fill="url(#ng3)" stroke="#c89a10" stroke-width="0.7"/><path d="M2.2 3 H6.8 M2.2 4.7 H6.8 M2.2 6.4 H6.8 M3.2 2 V7.4 M5.8 2 V7.4" stroke="#fbeaa0" stroke-width="0.45" opacity="0.8"/></svg>
<div class="t" style="left:18.70px;top:51px;font-size:11.98px;color:#1a1a1a;transform:scale(0.7187,0.81);transform-origin:0 0;-webkit-text-stroke-width:0.3px;">2020.02.04 09:02:23</div>
<div class="t" style="left:122.90px;top:51px;font-size:11.98px;color:#1a1a1a;transform:scale(0.7412,0.81);transform-origin:0 0;-webkit-text-stroke-width:0.3px;">*Romania Dec Producer Prices +3.92% On Year Vs. +3.37% In Nove...</div>
<div class="b" style="left:0.00px;top:63.88px;width:407.40px;height:16.12px;background:#ebebeb"></div>
<div class="b" style="left:0.00px;top:79.10px;width:407.40px;height:0.90px;background:#d9d9d9"></div>
<div class="b" style="left:118.60px;top:63.88px;width:1.00px;height:16.12px;background:#d9d9d9"></div>
<svg class="b" style="left:5px;top:66.58px" width="9" height="9.4" viewBox="0 0 9 9.4"><defs><linearGradient id="ng4" x1="0" y1="0" x2="0" y2="1"><stop offset="0" stop-color="#f6d860"/><stop offset="1" stop-color="#e2ad12"/></linearGradient></defs><rect x="0.4" y="0.4" width="8.2" height="8.6" rx="0.8" fill="url(#ng4)" stroke="#c89a10" stroke-width="0.7"/><path d="M2.2 3 H6.8 M2.2 4.7 H6.8 M2.2 6.4 H6.8 M3.2 2 V7.4 M5.8 2 V7.4" stroke="#fbeaa0" stroke-width="0.45" opacity="0.8"/></svg>
<div class="t" style="left:18.70px;top:67px;font-size:11.98px;color:#1a1a1a;transform:scale(0.7187,0.81);transform-origin:0 0;-webkit-text-stroke-width:0.3px;">2020.02.04 08:54:02</div>
<div class="t" style="left:122.90px;top:67px;font-size:11.98px;color:#1a1a1a;transform:scale(0.7738,0.81);transform-origin:0 0;-webkit-text-stroke-width:0.3px;">Asia Roundup: Aussie rebounds from 4-month low as RBA stands ...</div>
<div class="b" style="left:0.00px;top:80.00px;width:407.40px;height:16.12px;background:#fff"></div>
<div class="b" style="left:0.00px;top:95.22px;width:407.40px;height:0.90px;background:#d9d9d9"></div>
<div class="b" style="left:118.60px;top:80.00px;width:1.00px;height:16.12px;background:#d9d9d9"></div>
<svg class="b" style="left:5px;top:82.70px" width="9" height="9.4" viewBox="0 0 9 9.4"><defs><linearGradient id="ng5" x1="0" y1="0" x2="0" y2="1"><stop offset="0" stop-color="#f6d860"/><stop offset="1" stop-color="#e2ad12"/></linearGradient></defs><rect x="0.4" y="0.4" width="8.2" height="8.6" rx="0.8" fill="url(#ng5)" stroke="#c89a10" stroke-width="0.7"/><path d="M2.2 3 H6.8 M2.2 4.7 H6.8 M2.2 6.4 H6.8 M3.2 2 V7.4 M5.8 2 V7.4" stroke="#fbeaa0" stroke-width="0.45" opacity="0.8"/></svg>
<div class="t" style="left:18.70px;top:83px;font-size:11.98px;color:#1a1a1a;transform:scale(0.7187,0.81);transform-origin:0 0;-webkit-text-stroke-width:0.3px;">2020.02.04 08:45:02</div>
<div class="t" style="left:122.90px;top:83px;font-size:11.98px;color:#1a1a1a;transform:scale(0.773,0.81);transform-origin:0 0;-webkit-text-stroke-width:0.3px;">FxWirePro: Indian rupee appreciates noticeably against U.S. dollar...</div>
<div class="b" style="left:0.00px;top:96.12px;width:407.40px;height:16.12px;background:#ebebeb"></div>
<div class="b" style="left:0.00px;top:111.34px;width:407.40px;height:0.90px;background:#d9d9d9"></div>
<div class="b" style="left:118.60px;top:96.12px;width:1.00px;height:16.12px;background:#d9d9d9"></div>
<svg class="b" style="left:5px;top:98.82px" width="9" height="9.4" viewBox="0 0 9 9.4"><defs><linearGradient id="ng6" x1="0" y1="0" x2="0" y2="1"><stop offset="0" stop-color="#f6d860"/><stop offset="1" stop-color="#e2ad12"/></linearGradient></defs><rect x="0.4" y="0.4" width="8.2" height="8.6" rx="0.8" fill="url(#ng6)" stroke="#c89a10" stroke-width="0.7"/><path d="M2.2 3 H6.8 M2.2 4.7 H6.8 M2.2 6.4 H6.8 M3.2 2 V7.4 M5.8 2 V7.4" stroke="#fbeaa0" stroke-width="0.45" opacity="0.8"/></svg>
<div class="t" style="left:18.70px;top:99px;font-size:11.98px;color:#1a1a1a;transform:scale(0.7187,0.81);transform-origin:0 0;-webkit-text-stroke-width:0.3px;">2020.02.04 08:31:03</div>
<div class="t" style="left:122.90px;top:99px;font-size:11.98px;color:#1a1a1a;transform:scale(0.7638,0.81);transform-origin:0 0;-webkit-text-stroke-width:0.3px;">FxWirePro: USD/CNY fails to find support above 7.00 mark, bias tu...</div>
<div class="b" style="left:0.00px;top:112.24px;width:407.40px;height:16.12px;background:#fff"></div>
<div class="b" style="left:0.00px;top:127.46px;width:407.40px;height:0.90px;background:#d9d9d9"></div>
<div class="b" style="left:118.60px;top:112.24px;width:1.00px;height:16.12px;background:#d9d9d9"></div>
<svg class="b" style="left:5px;top:114.94px" width="9" height="9.4" viewBox="0 0 9 9.4"><defs><linearGradient id="ng7" x1="0" y1="0" x2="0" y2="1"><stop offset="0" stop-color="#f6d860"/><stop offset="1" stop-color="#e2ad12"/></linearGradient></defs><rect x="0.4" y="0.4" width="8.2" height="8.6" rx="0.8" fill="url(#ng7)" stroke="#c89a10" stroke-width="0.7"/><path d="M2.2 3 H6.8 M2.2 4.7 H6.8 M2.2 6.4 H6.8 M3.2 2 V7.4 M5.8 2 V7.4" stroke="#fbeaa0" stroke-width="0.45" opacity="0.8"/></svg>
</div>
<div class="b" style="left:13.00px;top:428.60px;width:407.40px;height:1.00px;background:#d6d6d6"></div>
<div class="b" style="left:420.40px;top:409.40px;width:13.00px;height:137.00px;background:#f0f0f0"></div>
<div class="b" style="left:421.00px;top:423.40px;width:12.00px;height:13.20px;background:#c3c3c3"></div>
<svg class="b" style="left:423px;top:414.8px" width="8" height="5" viewBox="0 0 8 5"><path d="M0.7 4.3 L4 1 L7.3 4.3" stroke="#2a2a2a" stroke-width="1.25" fill="none"/></svg>
<svg class="b" style="left:423.2px;top:537px" width="8" height="5" viewBox="0 0 8 5"><path d="M0.7 0.7 L4 4 L7.3 0.7" stroke="#2a2a2a" stroke-width="1.25" fill="none"/></svg>
<div class="b" style="left:12.50px;top:545.90px;width:421.00px;height:1.30px;background:#2e2e2e"></div>
<div class="b" style="left:15px;top:546.6px;width:51px;height:13.4px;background:#fff;border:1.2px solid #2e2e2e;border-top:none;box-sizing:border-box"></div>
<div class="t" style="left:23.00px;top:549px;font-size:11.11px;color:#151515;transform:scale(0.7903,0.81);transform-origin:0 0;-webkit-text-stroke-width:0.3px;">Новости</div>
<div class="t" style="left:72.80px;top:549px;font-size:11.11px;color:#6f6f6f;transform:scale(0.8011,0.81);transform-origin:0 0;-webkit-text-stroke-width:0.3px;">Сигналы</div>
<div class="b" style="left:117.40px;top:549.40px;width:1.00px;height:10.20px;background:#9a9a9a"></div>
<div class="t" style="left:124.90px;top:549px;font-size:11.11px;color:#6f6f6f;transform:scale(0.8101,0.81);transform-origin:0 0;-webkit-text-stroke-width:0.3px;">Почтовый ящик</div>
<div class="b" style="left:199.20px;top:549.40px;width:1.00px;height:10.20px;background:#9a9a9a"></div>
<div class="t" style="left:205.80px;top:549px;font-size:11.11px;color:#6f6f6f;transform:scale(0.8011,0.81);transform-origin:0 0;-webkit-text-stroke-width:0.3px;">Журнал</div>
<div class="b" style="left:247.80px;top:549.40px;width:1.00px;height:10.20px;background:#9a9a9a"></div>
<div class="b" style="left:436.20px;top:404.40px;width:1.00px;height:160.00px;background:#c6c6c6"></div>
<div class="b" style="left:438.20px;top:406.80px;width:1.00px;height:156.50px;background:#c6c6c6"></div>
<svg class="b" style="left:441.4px;top:410.8px" width="6.4" height="5" viewBox="0 0 6.4 5"><path d="M0.7 0.5 L5.7 4.5 M5.7 0.5 L0.7 4.5" stroke="#111" stroke-width="1.25"/></svg>
<div class="b" style="left:439.20px;top:419.80px;width:10.30px;height:142.80px;background:#c2d4e6"></div>
<div class="t" style="left:441.2px;top:560.6px;font-size:10.1px;line-height:10px;color:#151515;-webkit-text-stroke-width:0.45px;transform-origin:0 0;transform:rotate(-90deg) scaleX(0.868)">Счета</div>
<div class="b" style="left:449.60px;top:408.40px;width:1.00px;height:154.40px;background:#a3a3a3"></div>
<div class="b" style="left:439.00px;top:404.60px;width:458.00px;height:1.00px;background:#fafafa"></div>
<div class="b" style="left:450.50px;top:407.20px;width:446.00px;height:1.30px;background:#b8b8b8"></div>
<div class="b" style="left:450.50px;top:408.40px;width:446.00px;height:154.40px;background:#fff"></div>
<div class="b" style="left:524.40px;top:409.00px;width:1.00px;height:19.40px;background:#e8e8e8"></div>
<div class="b" style="left:671.80px;top:409.00px;width:1.00px;height:19.40px;background:#e8e8e8"></div>
<div class="b" style="left:745.50px;top:409.00px;width:1.00px;height:19.40px;background:#e8e8e8"></div>
<div class="b" style="left:818.60px;top:409.00px;width:1.00px;height:19.40px;background:#e8e8e8"></div>
<div class="b" style="left:450.50px;top:428.30px;width:446.00px;height:0.90px;background:#d6d6d6"></div>
<div class="t" style="left:456.30px;top:415px;font-size:11.48px;color:#151515;transform:scale(0.7666,0.81);transform-origin:0 0;-webkit-text-stroke-width:0.45px;">Логин</div>
<div class="t" style="left:529.50px;top:415px;font-size:11.48px;color:#151515;transform:scale(0.7666,0.81);transform-origin:0 0;-webkit-text-stroke-width:0.45px;">Имя</div>
<div class="t" style="right:159.60px;top:415px;font-size:11.48px;color:#151515;transform:scale(0.8066,0.81);transform-origin:100% 0;-webkit-text-stroke-width:0.45px;">Баланс</div>
<div class="t" style="right:86.00px;top:415px;font-size:11.48px;color:#151515;transform:scale(0.7753,0.81);transform-origin:100% 0;-webkit-text-stroke-width:0.45px;">Средства</div>
<div class="t" style="right:8.80px;top:415px;font-size:11.48px;color:#151515;transform:scale(0.8493,0.81);transform-origin:100% 0;-webkit-text-stroke-width:0.45px;">Уровень</div>
<div class="b" style="left:450.50px;top:428.90px;width:446.00px;height:15.75px;background:#ebebeb"></div>
<div class="b" style="left:450.50px;top:443.85px;width:446.00px;height:0.80px;background:#d6d6d6"></div>
<div class="b" style="left:524.40px;top:428.90px;width:1.00px;height:15.75px;background:#d6d6d6"></div>
<div class="b" style="left:671.80px;top:428.90px;width:1.00px;height:15.75px;background:#d6d6d6"></div>
<div class="b" style="left:745.50px;top:428.90px;width:1.00px;height:15.75px;background:#d6d6d6"></div>
<div class="b" style="left:818.60px;top:428.90px;width:1.00px;height:15.75px;background:#d6d6d6"></div>
<svg class="b" style="left:453px;top:430.20px" width="11" height="13" viewBox="0 0 11 13"><path d="M0.7 11.2 Q0.7 6.8 5.5 6.8 Q10.3 6.8 10.3 11.2 Q10.3 13 5.5 13 Q0.7 13 0.7 11.2 Z" fill="#38c038" stroke="#1a8c1a" stroke-width="0.55"/><path d="M5 7.2 L7.4 11.2" stroke="#f4fff4" stroke-width="0.9"/><circle cx="5.5" cy="3.7" r="3.1" fill="#f4b818" stroke="#a87004" stroke-width="0.55"/><path d="M2.6 3.2 Q3 0.7 5.5 0.7 Q8 0.7 8.4 3.2 Q7 2 5.5 2.2 Q4 2 2.6 3.2 Z" fill="#c88808"/></svg>
<div class="t" style="left:466.60px;top:432px;font-size:11.85px;color:#111;transform:scale(0.7401,0.81);transform-origin:0 0;-webkit-text-stroke-width:0.3px;">64377234</div>
<div class="t" style="left:529.50px;top:432px;font-size:11.85px;color:#111;transform:scale(0.7511,0.81);transform-origin:0 0;-webkit-text-stroke-width:0.3px;">Ku Tasut</div>
<div class="t" style="right:157.40px;top:432px;font-size:11.85px;color:#111;transform:scale(0.7342,0.81);transform-origin:100% 0;-webkit-text-stroke-width:0.3px;">5 000.00</div>
<div class="t" style="right:84.00px;top:432px;font-size:11.85px;color:#111;transform:scale(0.7342,0.81);transform-origin:100% 0;-webkit-text-stroke-width:0.3px;">5 000.00</div>
<div class="b" style="left:450.50px;top:444.65px;width:446.00px;height:15.75px;background:#0374d6"></div>
<div class="b" style="left:524.40px;top:444.65px;width:1.00px;height:15.75px;background:#3b8fdc"></div>
<div class="b" style="left:671.80px;top:444.65px;width:1.00px;height:15.75px;background:#3b8fdc"></div>
<div class="b" style="left:745.50px;top:444.65px;width:1.00px;height:15.75px;background:#3b8fdc"></div>
<div class="b" style="left:818.60px;top:444.65px;width:1.00px;height:15.75px;background:#3b8fdc"></div>
<svg class="b" style="left:453px;top:445.95px" width="11" height="13" viewBox="0 0 11 13"><path d="M0.7 11.2 Q0.7 6.8 5.5 6.8 Q10.3 6.8 10.3 11.2 Q10.3 13 5.5 13 Q0.7 13 0.7 11.2 Z" fill="#38c038" stroke="#1a8c1a" stroke-width="0.55"/><path d="M5 7.2 L7.4 11.2" stroke="#f4fff4" stroke-width="0.9"/><circle cx="5.5" cy="3.7" r="3.1" fill="#f4b818" stroke="#a87004" stroke-width="0.55"/><path d="M2.6 3.2 Q3 0.7 5.5 0.7 Q8 0.7 8.4 3.2 Q7 2 5.5 2.2 Q4 2 2.6 3.2 Z" fill="#c88808"/></svg>
<div class="t" style="left:466.60px;top:448px;font-size:11.85px;color:#cfe5fb;transform:scale(0.7401,0.81);transform-origin:0 0;-webkit-text-stroke-width:0.3px;">64377238</div>
<div class="t" style="left:529.50px;top:448px;font-size:11.85px;color:#fff;transform:scale(0.7511,0.81);transform-origin:0 0;-webkit-text-stroke-width:0.3px;">Sa Kasut</div>
<div class="t" style="right:157.40px;top:448px;font-size:11.85px;color:#fff;transform:scale(0.7342,0.81);transform-origin:100% 0;-webkit-text-stroke-width:0.3px;">5 000.00</div>
<div class="t" style="right:84.00px;top:448px;font-size:11.85px;color:#fff;transform:scale(0.7342,0.81);transform-origin:100% 0;-webkit-text-stroke-width:0.3px;">5 000.00</div>
<div class="b" style="left:450.50px;top:460.40px;width:446.00px;height:16.65px;background:#c9c9c9"></div>
<div class="b" style="left:450.50px;top:476.15px;width:446.00px;height:0.90px;background:#b9b9b9"></div>
<svg class="b" style="left:451.5px;top:461.60px" width="14" height="13.5" viewBox="0 0 14 13.5"><g transform="translate(0 1)"><path d="M0.7 11.2 Q0.7 6.8 5.5 6.8 Q10.3 6.8 10.3 11.2 Q10.3 13 5.5 13 Q0.7 13 0.7 11.2 Z" fill="#38c038" stroke="#1a8c1a" stroke-width="0.55"/><path d="M5 7.2 L7.4 11.2" stroke="#f4fff4" stroke-width="0.9"/><circle cx="5.5" cy="3.7" r="3.1" fill="#f4b818" stroke="#a87004" stroke-width="0.55"/><path d="M2.6 3.2 Q3 0.7 5.5 0.7 Q8 0.7 8.4 3.2 Q7 2 5.5 2.2 Q4 2 2.6 3.2 Z" fill="#c88808"/></g><g transform="translate(3.2 0) scale(0.98)"><path d="M0.7 11.2 Q0.7 6.8 5.5 6.8 Q10.3 6.8 10.3 11.2 Q10.3 13 5.5 13 Q0.7 13 0.7 11.2 Z" fill="#e8c428" stroke="#b08a10" stroke-width="0.55"/><path d="M5 7.2 L7.4 11.2" stroke="#f4fff4" stroke-width="0.9"/><circle cx="5.5" cy="3.7" r="3.1" fill="#f4b818" stroke="#a87004" stroke-width="0.55"/><path d="M2.6 3.2 Q3 0.7 5.5 0.7 Q8 0.7 8.4 3.2 Q7 2 5.5 2.2 Q4 2 2.6 3.2 Z" fill="#c88808"/></g></svg>
<div class="t" style="left:466.60px;top:464px;font-size:11.85px;color:#111;transform:scale(0.7806,0.81);transform-origin:0 0;-webkit-text-stroke-width:0.3px;font-weight:bold;">Всего, USD</div>
<div class="t" style="right:157.40px;top:464px;font-size:11.85px;color:#111;transform:scale(0.8397,0.81);transform-origin:100% 0;-webkit-text-stroke-width:0.3px;font-weight:bold;">11 055.50</div>
<div class="t" style="right:84.00px;top:464px;font-size:11.85px;color:#111;transform:scale(0.8397,0.81);transform-origin:100% 0;-webkit-text-stroke-width:0.3px;font-weight:bold;">11 055.50</div>
<div class="b" style="left:1.00px;top:564.00px;width:898.00px;height:1.10px;background:#a6a6a6"></div>
<div class="b" style="left:1.00px;top:565.60px;width:898.00px;height:0.90px;background:#dcdcdc"></div>
<div class="t" style="left:3.00px;top:570px;font-size:12.84px;color:#151515;transform:scale(0.7305,0.81);transform-origin:0 0;-webkit-text-stroke-width:0.3px;">Для справки нажмите F1</div>
<div class="b" style="left:785.00px;top:569.00px;width:1.00px;height:13.00px;background:#a6a6a6"></div>
<div class="t" style="left:790.30px;top:570px;font-size:12.84px;color:#151515;transform:scale(0.7087,0.81);transform-origin:0 0;-webkit-text-stroke-width:0.3px;">790 / 3 Kb</div>
<div class="b" style="left:894.60px;top:574.20px;width:1.20px;height:1.20px;background:#a3a3a3"></div>
<div class="b" style="left:891.80px;top:577.00px;width:1.20px;height:1.20px;background:#a3a3a3"></div>
<div class="b" style="left:894.60px;top:577.00px;width:1.20px;height:1.20px;background:#a3a3a3"></div>
<div class="b" style="left:889.00px;top:579.80px;width:1.20px;height:1.20px;background:#a3a3a3"></div>
<div class="b" style="left:891.80px;top:579.80px;width:1.20px;height:1.20px;background:#a3a3a3"></div>
<div class="b" style="left:894.60px;top:579.80px;width:1.20px;height:1.20px;background:#a3a3a3"></div>
<div class="b" style="left:1.00px;top:581.00px;width:898.00px;height:1.00px;background:#fafafa"></div>
<div class="b" style="left:898.00px;top:26.00px;width:1.00px;height:556.00px;background:#f4f8fa"></div>
<div class="b" style="left:0.00px;top:0.00px;width:900.00px;height:1.00px;background:#2d5b7e"></div>
<div class="b" style="left:0.00px;top:582.00px;width:900.00px;height:1.00px;background:#12465f"></div>
<div class="b" style="left:0.00px;top:0.00px;width:1.00px;height:583.00px;background:#475e69"></div>
<div class="b" style="left:899.00px;top:0.00px;width:1.00px;height:583.00px;background:#2c4050"></div>
</body></html>
